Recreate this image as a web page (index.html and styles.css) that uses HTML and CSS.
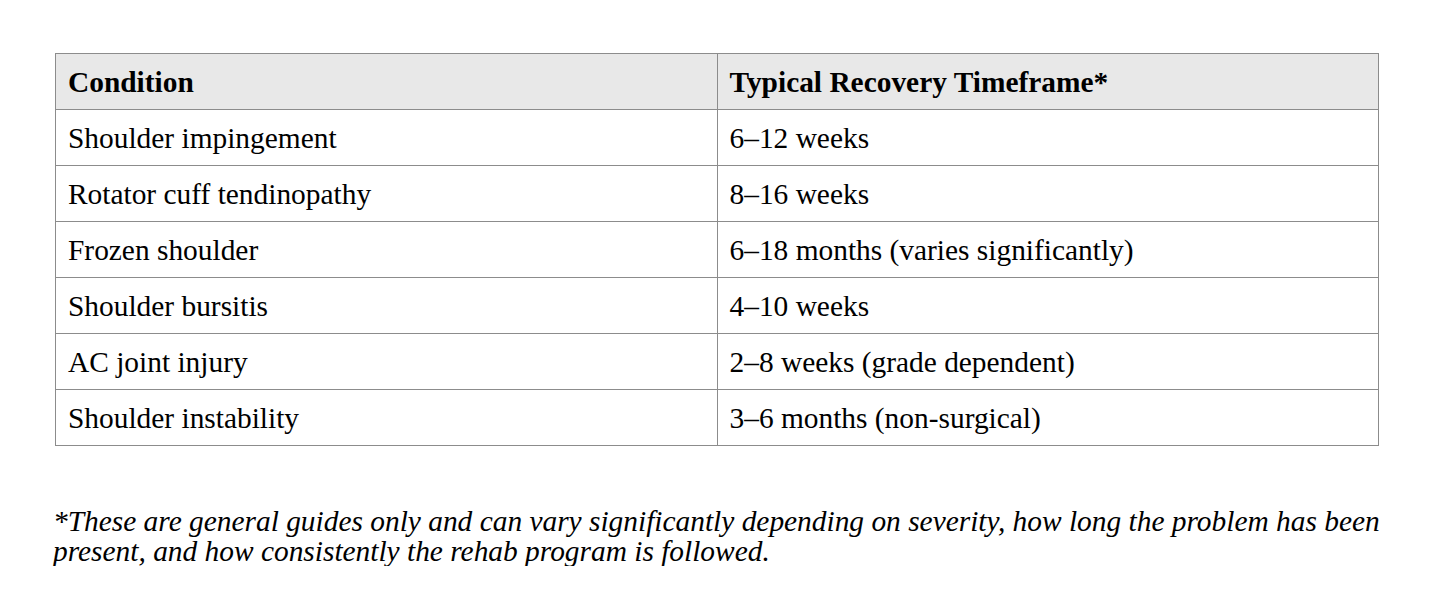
FILE: index.html
```html
<!DOCTYPE html>
<html>
<head>
<meta charset="utf-8">
<link rel="stylesheet" href="styles.css">
</head>
<body>
<div class="page">
  <table class="recovery">
    <thead>
      <tr><th>Condition</th><th>Typical Recovery Timeframe*</th></tr>
    </thead>
    <tbody>
      <tr><td>Shoulder impingement</td><td>6–12 weeks</td></tr>
      <tr><td>Rotator cuff tendinopathy</td><td>8–16 weeks</td></tr>
      <tr><td>Frozen shoulder</td><td>6–18 months (varies significantly)</td></tr>
      <tr><td>Shoulder bursitis</td><td>4–10 weeks</td></tr>
      <tr><td>AC joint injury</td><td>2–8 weeks (grade dependent)</td></tr>
      <tr><td>Shoulder instability</td><td>3–6 months (non-surgical)</td></tr>
    </tbody>
  </table>
  <p class="note">*These are general guides only and can vary significantly depending on severity, how long the problem has been present, and how consistently the rehab program is followed.</p>
</div>
</body>
</html>
```
FILE: styles.css
```css
html, body {
  margin: 0;
  padding: 0;
  background: #ffffff;
}
body {
  font-family: "Liberation Serif", "Times New Roman", serif;
  color: #000000;
}
.page {
  padding: 53px 55px 0 55px;
  width: 1324px;
}
.recovery {
  width: 1324px;
  border-collapse: collapse;
  table-layout: fixed;
  font-size: 29.4px;
}
.recovery th,
.recovery td {
  border: 1px solid #8c8c8c;
  text-align: left;
  padding: 0 12px;
  height: 55px;
  line-height: 28px;
}
.recovery th {
  background: #e8e8e8;
  font-weight: bold;
}
.note {
  margin: 60px 0 0 -2px;
  width: 1345px;
  font-size: 29.4px;
  line-height: 30px;
  font-style: italic;
}
```
